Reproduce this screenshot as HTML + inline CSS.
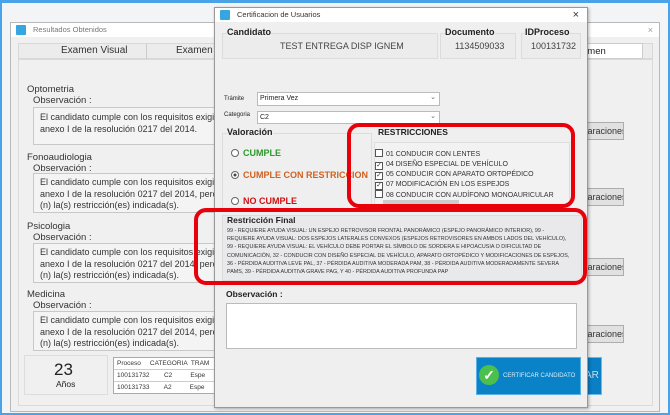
<!DOCTYPE html>
<html><head><meta charset="utf-8"><style>
*{margin:0;padding:0;box-sizing:border-box}
body{width:670px;height:415px;overflow:hidden;background:#f3f4f6;font-family:"Liberation Sans",sans-serif;position:relative;color:#222}
.a{position:absolute}
.frame{left:0;top:0;width:670px;height:415px;border:2px solid #4aa3e8;border-top-width:3px}
.win{background:#f0f0f0;border:1px solid #b8b8b8}
.tb{background:#fff;font-size:8px;color:#777;height:14px;line-height:14px;padding-left:22px}
.ic{position:absolute;left:5px;top:2px;width:10px;height:10px;background:#35a6e0;border-radius:1px}
.grp{border:1px solid #dcdcdc;background:#ececec}
.txt{border:1px solid #c8c8c8;background:#f4f4f4;font-size:9px;line-height:12px;padding:3px 6px;color:#333;white-space:nowrap;overflow:hidden}
.lbl{font-size:9.5px;color:#333}
.btn{background:#e1e1e1;border:1px solid #adadad;font-size:9px;line-height:16px;padding-left:4px;color:#333;overflow:hidden;white-space:nowrap}
.b{font-weight:bold}
.red{border:4px solid #e8000b;border-radius:12px}
.cb{display:inline-block;width:8px;height:8px;border:1px solid #555;background:#fff;margin-right:3px;vertical-align:-1px;font-size:7px;line-height:6px;text-align:center}
.rad{display:inline-block;width:8px;height:8px;border:1px solid #666;border-radius:50%;background:#fff;margin-right:4px;vertical-align:-1px}
</style></head><body>
<div class="a win" style="left:10px;top:22px;width:650px;height:390px">
 <div class="tb" style="position:relative;font-size:7.5px">Resultados Obtenidos<span class="ic"></span><span class="a" style="right:6px;top:0;color:#999;font-size:9px">×</span></div>
 <div class="a" style="left:7px;top:20px;width:635px;height:16px;background:#ececec;border:1px solid #d8d8d8"></div>
 <div class="a lbl" style="left:50px;top:22px;font-size:10px">Examen Visual</div>
 <div class="a" style="left:135px;top:20px;width:1px;height:16px;background:#ccc"></div>
 <div class="a lbl" style="left:165px;top:22px;font-size:10px">Examen Au</div>
 <div class="a" style="left:568px;top:20px;width:64px;height:16px;background:#fff;border:1px solid #ccc;font-size:9.5px;padding:2px 0 0 2px">umen</div>
 <div class="a" style="left:7px;top:36px;width:635px;height:347px;border:1px solid #dadada"></div>
</div>
<div class="a lbl" style="left:27px;top:84px">Optometria</div>
<div class="a lbl" style="left:33px;top:95px">Observación :</div>
<div class="a txt" style="left:33px;top:107px;width:250px;height:38px">El candidato cumple con los requisitos exigidos en el<br>anexo I de la resolución 0217 del 2014.</div>
<div class="a lbl" style="left:27px;top:152px">Fonoaudiologia</div>
<div class="a lbl" style="left:33px;top:163px">Observación :</div>
<div class="a txt" style="left:33px;top:173px;width:250px;height:40px;line-height:11.5px">El candidato cumple con los requisitos exigidos en el<br>anexo I de la resolución 0217 del 2014, pero le aplica<br>(n) la(s) restricción(es) indicada(s).</div>
<div class="a lbl" style="left:27px;top:221px">Psicologia</div>
<div class="a lbl" style="left:33px;top:232px">Observación :</div>
<div class="a txt" style="left:33px;top:243px;width:250px;height:40px;line-height:11.5px">El candidato cumple con los requisitos exigidos en el<br>anexo I de la resolución 0217 del 2014, pero le aplica<br>(n) la(s) restricción(es) indicada(s).</div>
<div class="a lbl" style="left:27px;top:289px">Medicina</div>
<div class="a lbl" style="left:33px;top:300px">Observación :</div>
<div class="a txt" style="left:33px;top:311px;width:250px;height:40px;line-height:11.5px">El candidato cumple con los requisitos exigidos en el<br>anexo I de la resolución 0217 del 2014, pero le aplica<br>(n) la(s) restricción(es) indicada(s).</div>
<div class="a" style="left:24px;top:355px;width:84px;height:40px;border:1px solid #ddd"></div>
<div class="a" style="left:54px;top:360px;font-size:17px">23</div>
<div class="a" style="left:56px;top:379px;font-size:8.5px">Años</div>
<div class="a" style="left:113px;top:357px;width:110px;height:37px;background:#fff;border:1px solid #aaa;font-size:6.5px;color:#333;white-space:nowrap;overflow:hidden">
 <div style="height:12px;border-bottom:1px solid #ccc;padding:2px 0 0 3px">Proceso &nbsp;&nbsp;&nbsp; CATEGORIA &nbsp;TRAM</div>
 <div style="height:12px;border-bottom:1px solid #ccc;padding:2px 0 0 3px">100131732 &nbsp;&nbsp;&nbsp;&nbsp;&nbsp;&nbsp; C2 &nbsp;&nbsp;&nbsp;&nbsp;&nbsp;&nbsp;&nbsp;&nbsp; Espe</div>
 <div style="padding:2px 0 0 3px">100131733 &nbsp;&nbsp;&nbsp;&nbsp;&nbsp;&nbsp; A2 &nbsp;&nbsp;&nbsp;&nbsp;&nbsp;&nbsp;&nbsp;&nbsp; Espe</div>
</div>
<div class="a btn" style="left:570px;top:122px;width:54px;height:18px">&nbsp;&nbsp;&nbsp;&nbsp;&nbsp;araciones</div>
<div class="a btn" style="left:570px;top:188px;width:54px;height:18px">&nbsp;&nbsp;&nbsp;&nbsp;&nbsp;araciones</div>
<div class="a btn" style="left:570px;top:258px;width:54px;height:18px">&nbsp;&nbsp;&nbsp;&nbsp;&nbsp;araciones</div>
<div class="a btn" style="left:570px;top:325px;width:54px;height:18px">&nbsp;&nbsp;&nbsp;&nbsp;&nbsp;araciones</div>
<div class="a" style="left:580px;top:357px;width:22px;height:38px;background:#0a7fc4;border:1px solid #6bb9e6;color:#cde;font-size:10px;padding:12px 0 0 4px">AR</div>

<div class="a win" style="left:214px;top:7px;width:374px;height:401px;background:#efefef;border-color:#999;box-shadow:1px 1px 3px rgba(0,0,0,.3)">
 <div class="tb" style="position:relative;color:#333;font-size:7.5px">Certificacion de Usuarios<span class="ic"></span><span class="a" style="right:8px;top:0;font-size:11px;color:#333">×</span></div>
</div>
<div class="a grp" style="left:222px;top:33px;width:216px;height:26px"></div>
<div class="a grp" style="left:440px;top:33px;width:76px;height:26px"></div>
<div class="a grp" style="left:521px;top:33px;width:60px;height:26px"></div>
<div class="a b" style="left:227px;top:27px;font-size:9px;background:#efefef">Candidato</div>
<div class="a b" style="left:445px;top:27px;font-size:9px;background:#efefef">Documento</div>
<div class="a b" style="left:525px;top:27px;font-size:9px;background:#efefef">IDProceso</div>
<div class="a" style="left:280px;top:41px;font-size:9px;color:#444">TEST ENTREGA DISP IGNEM</div>
<div class="a" style="left:455px;top:41px;font-size:9px;color:#444">1134509033</div>
<div class="a" style="left:531px;top:41px;font-size:9px;color:#444">100131732</div>
<div class="a" style="left:224px;top:96px;font-size:6px">Trámite</div>
<div class="a" style="left:257px;top:92px;width:183px;height:14px;background:#fff;border:1px solid #bbb;font-size:7px;padding:2px 2px">Primera Vez<span class="a" style="right:3px;top:0;color:#666">⌄</span></div>
<div class="a" style="left:224px;top:112px;font-size:6px">Categoria</div>
<div class="a" style="left:257px;top:111px;width:183px;height:13px;background:#fff;border:1px solid #bbb;font-size:7px;padding:2px 2px">C2<span class="a" style="right:3px;top:0;color:#666">⌄</span></div>
<div class="a grp" style="left:222px;top:133px;width:150px;height:76px;background:#efefef"></div>
<div class="a b" style="left:227px;top:127px;font-size:9px;background:#efefef">Valoración</div>
<div class="a b" style="left:231px;top:148px;font-size:9px;color:#2a9a2a"><span class="rad"></span>CUMPLE</div>
<div class="a b" style="left:231px;top:170px;font-size:9px;color:#d06020;white-space:nowrap"><span class="rad" style="background:radial-gradient(#444 30%,#fff 40%)"></span>CUMPLE CON RESTRICCION</div>
<div class="a b" style="left:231px;top:196px;font-size:9px;color:#d01010"><span class="rad"></span>NO CUMPLE</div>
<div class="a b" style="left:378px;top:127px;font-size:8.5px">RESTRICCIONES</div>
<div class="a" style="left:374px;top:142px;width:196px;height:66px;background:#f2f2f2;border:1px solid #ddd"></div>
<div class="a" style="left:375px;top:149px;font-size:7px;line-height:10px;color:#333;white-space:nowrap">
<div><span class="cb"></span>01 CONDUCIR CON LENTES</div>
<div><span class="cb">✓</span>04 DISEÑO ESPECIAL DE VEHÍCULO</div>
<div><span class="cb">✓</span>05 CONDUCIR CON APARATO ORTOPÉDICO</div>
<div><span class="cb">✓</span>07 MODIFICACIÓN EN LOS ESPEJOS</div>
<div><span class="cb"></span>08 CONDUCIR CON AUDÍFONO MONOAURICULAR</div>
</div>
<div class="a" style="left:383px;top:200px;width:76px;height:6px;background:#ccc"></div>
<div class="a red" style="left:347px;top:123px;width:228px;height:85px"></div>
<div class="a grp" style="left:222px;top:215px;width:360px;height:66px;background:#e9e9ec"></div>
<div class="a b" style="left:227px;top:215px;font-size:8.5px">Restricción Final</div>
<div class="a" style="left:227px;top:227px;width:345px;font-size:5.4px;line-height:8.2px;color:#333">99 - REQUIERE AYUDA VISUAL: UN ESPEJO RETROVISOR FRONTAL PANORÁMICO (ESPEJO PANORÁMICO INTERIOR), 99 - REQUIERE AYUDA VISUAL: DOS ESPEJOS LATERALES CONVEXOS (ESPEJOS RETROVISORES EN AMBOS LADOS DEL VEHÍCULO), 99 - REQUIERE AYUDA VISUAL: EL VEHÍCULO DEBE PORTAR EL SÍMBOLO DE SORDERA E HIPOACUSIA O DIFICULTAD DE COMUNICACIÓN, 32 - CONDUCIR CON DISEÑO ESPECIAL DE VEHÍCULO, APARATO ORTOPÉDICO Y MODIFICACIONES DE ESPEJOS, 36 - PÉRDIDA AUDITIVA LEVE PAL, 37 - PÉRDIDA AUDITIVA MODERADA PAM, 38 - PÉRDIDA AUDITIVA MODERADAMENTE SEVERA PAMS, 39 - PÉRDIDA AUDITIVA GRAVE PAG, Y 40 - PÉRDIDA AUDITIVA PROFUNDA PAP</div>
<div class="a red" style="left:194px;top:208px;width:393px;height:77px"></div>
<div class="a b" style="left:226px;top:289px;font-size:8.5px">Observación :</div>
<div class="a" style="left:226px;top:303px;width:351px;height:46px;background:#fff;border:1px solid #bbb"></div>
<div class="a" style="left:476px;top:357px;width:105px;height:38px;background:#0a82c8;border:1px solid #5ab0e4;color:#d8ecf8;font-size:6px;padding:15px 0 0 26px;white-space:nowrap;overflow:hidden">CERTIFICAR CANDIDATO</div>
<div class="a" style="left:479px;top:365px;width:20px;height:20px;border-radius:50%;background:#4cc04c;color:#fff;font-size:14px;line-height:20px;text-align:center;font-weight:bold">✓</div>
<div class="a frame"></div>
</body></html>
